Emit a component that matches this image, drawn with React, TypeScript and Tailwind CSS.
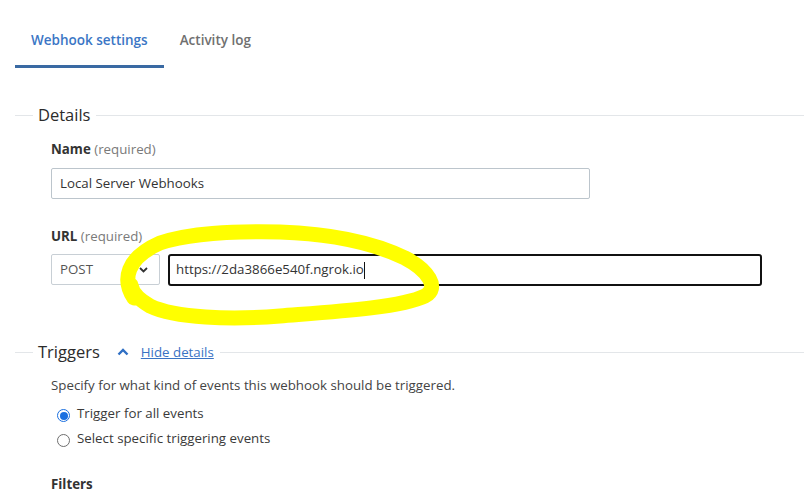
const font = { fontFamily: '"Open Sans", "Noto Sans", sans-serif' };

const SectionHeader = ({ title, children }: { title: string; children?: React.ReactNode }) => (
  <div className="flex items-center">
    <div className="w-[18px] h-px bg-[#e3e6e9]" />
    <span className="ml-[5px] text-[16.5px] leading-[22px] text-[#2b2b2b]">{title}</span>
    {children}
    <div className="flex-1 h-px bg-[#e3e6e9] ml-[6px]" />
  </div>
);

const Radio = ({ checked, label }: { checked?: boolean; label: string }) => (
  <label className="flex items-center gap-[7px] text-[13.3px] leading-[18px] text-[#3a3a3a]">
    <span
      className={
        checked
          ? "mt-[5px] w-[13px] h-[13px] rounded-full border border-[#1a6fe0] flex items-center justify-center bg-white"
          : "mt-[5px] w-[13px] h-[13px] rounded-full border border-[#6e6e6e] bg-white"
      }
    >
      {checked && <span className="w-[8px] h-[8px] rounded-full bg-[#1a6fe0]" />}
    </span>
    {label}
  </label>
);

export default function App() {
  return (
    <div className="relative w-[804px] h-[494px] overflow-hidden bg-white" style={font}>
      {/* tabs */}
      <div className="flex pl-[15px]">
        <div className="px-[16px] pt-[31px] pb-[16px] leading-[18px] text-[13.5px] font-semibold text-[#3b76c5] border-b-[3px] border-[#3a6aa3]">
          Webhook settings
        </div>
        <div className="px-[16px] pt-[31px] pb-[16px] leading-[18px] text-[13.5px] font-semibold text-[#707070]">
          Activity log
        </div>
      </div>

      <div className="pl-[15px] pt-[36px]">
        <SectionHeader title="Details" />
        <div className="pl-[36px]">
          <div className="mt-[14px] text-[13.3px] leading-[18px]">
            <span className="font-bold text-[#333]">Name</span>{" "}
            <span className="text-[#7a7a7a]">(required)</span>
          </div>
          <div className="mt-[10px] w-[539px] h-[31px] border border-[#bcc5cc] rounded-[2px] flex items-center px-[8px] text-[13.3px] text-[#333]">
            Local Server Webhooks
          </div>
          <div className="mt-[28px] text-[13.3px] leading-[18px]">
            <span className="font-bold text-[#333]">URL</span>{" "}
            <span className="text-[#7a7a7a]">(required)</span>
          </div>
          <div className="mt-[9px] flex gap-[8px]">
            <div className="w-[109px] h-[31px] border border-[#c8cfd5] rounded-[2px] flex items-center justify-between pl-[8px] pr-[11px] text-[13.3px] text-[#555]">
              POST
              <svg width="9" height="6" viewBox="0 0 9 6">
                <path d="M1 1l3.5 3.5L8 1" fill="none" stroke="#333" strokeWidth="1.8" />
              </svg>
            </div>
            <div className="w-[594px] h-[32px] border-2 border-[#111] rounded-[3px] flex items-center px-[6px] text-[13.3px] text-[#333]">
              https://2da3866e540f.ngrok.io
              <span className="w-px h-[17px] bg-[#111]" />
            </div>
          </div>
        </div>

        <div className="mt-[55px]">
          <SectionHeader title="Triggers">
            <svg className="ml-[17px]" width="12" height="8" viewBox="0 0 12 8">
              <path d="M1.5 6.5L6 2l4.5 4.5" fill="none" stroke="#2f6fc4" strokeWidth="2.4" />
            </svg>
            <a className="ml-[12px] text-[13.3px] leading-[18px] text-[#3a73c4] underline">Hide details</a>
          </SectionHeader>
        </div>
        <div className="pl-[36px]">
          <p className="mt-[13px] text-[13.3px] leading-[18px] text-[#444]">
            Specify for what kind of events this webhook should be triggered.
          </p>
          <div className="mt-[10px] pl-[6px] flex flex-col gap-[7px]">
            <Radio checked label="Trigger for all events" />
            <Radio label="Select specific triggering events" />
          </div>
          <div className="mt-[28px] text-[13.3px] leading-[18px] font-bold text-[#333]">Filters</div>
        </div>
      </div>

      {/* hand-drawn highlight */}
      <svg className="absolute left-0 top-0 pointer-events-none" width="804" height="494">
        <path
          d="M134 298 C122 280 126 258 160 243 C190 233 230 231 280 232 C340 234 380 246 405 258 C428 270 440 288 425 296 C400 308 330 312 280 316 C230 320 175 318 150 306 C138 299 132 292 131 285"
          fill="none"
          stroke="#ffff00"
          strokeWidth="15"
          strokeLinecap="round"
          strokeLinejoin="round"
        />
      </svg>
    </div>
  );
}
